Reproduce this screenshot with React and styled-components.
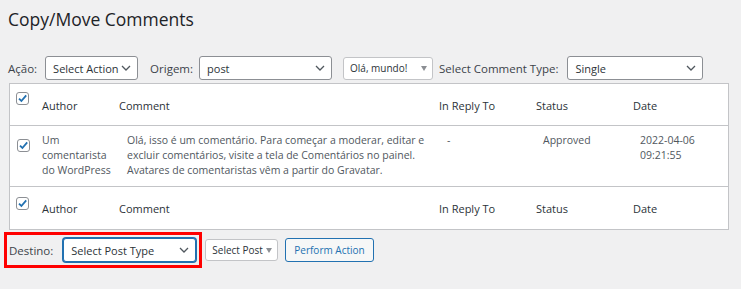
import React from 'react'
import styled, { createGlobalStyle } from 'styled-components'

const GlobalStyle = createGlobalStyle`
  html, body {
    margin: 0;
    background: #f0f0f1;
    font-family: 'Open Sans', 'Noto Sans', sans-serif;
    color: #3c434a;
  }
`

const Page = styled.div`
  padding: 6px 12px 0 8px;
  height: 289px;
  box-sizing: border-box;
`

const Title = styled.h1`
  margin: 0;
  font-size: 17.5px;
  font-weight: 400;
  line-height: 26px;
  color: #1d2327;
`

const Toolbar = styled.div`
  display: flex;
  align-items: center;
  margin-top: 24px;
  height: 24px;
`

const Label = styled.span`
  font-size: 11.5px;
  color: #3c434a;
  white-space: nowrap;
  margin-right: ${p => p.gap || 5}px;
`

const Select = styled.div`
  box-sizing: border-box;
  display: flex;
  align-items: center;
  justify-content: space-between;
  flex: none;
  width: ${p => p.w}px;
  height: 24px;
  padding: 0 6px 0 7px;
  background: #fff;
  border: 1px solid ${p => (p.focus ? '#2271b1' : '#8c8f94')};
  box-shadow: ${p => (p.focus ? '0 0 0 1px #2271b1' : 'none')};
  border-radius: 3px;
  font-size: 11px;
  white-space: nowrap;
  color: #2c3338;
  margin-right: ${p => p.gap || 0}px;
`

const MiniSelect = styled.div`
  box-sizing: border-box;
  display: flex;
  align-items: center;
  justify-content: space-between;
  flex: none;
  width: ${p => p.w}px;
  height: ${p => p.h || 23}px;
  padding: 0 5px 0 6px;
  background: #fff;
  border: 1px solid #c3c4c7;
  border-radius: 3px;
  font-size: 10px;
  white-space: nowrap;
  color: #2c3338;
  margin-right: ${p => p.gap || 0}px;
`

const Caret = styled.span`
  width: 0;
  height: 0;
  border-left: 3px solid transparent;
  border-right: 3px solid transparent;
  border-top: 5px solid #8c8f94;
`

const Chevron = () => (
  <svg width='10' height='6' viewBox='0 0 10 6'>
    <path d='M1 1 L5 5 L9 1' fill='none' stroke='#50575e' strokeWidth='1.3' />
  </svg>
)

const Table = styled.div`
  margin: 3px 0 0 1px;
  width: 720px;
  box-sizing: border-box;
  background: #fff;
  border: 1px solid #c3c4c7;
`

const Row = styled.div`
  display: grid;
  grid-template-columns: 32px 77px 320px 97px 97px 1fr;
  height: ${p => p.h}px;
  box-sizing: border-box;
  border-top: ${p => (p.first ? 'none' : '1px solid #c3c4c7')};
`

const BoxCell = styled.div`
  padding: ${p => p.top}px 0 0 ${p => p.left}px;
`

const HeadCell = styled.div`
  align-self: end;
  padding-bottom: ${p => p.bottom}px;
  font-size: 11px;
  line-height: 16px;
  color: #2c3338;
`

const Cell = styled.div`
  padding: 7px 0 0 ${p => p.indent || 0}px;
  font-size: 10.5px;
  line-height: 15px;
  color: #50575e;
`

const Check = () => (
  <svg width='13' height='13' viewBox='0 0 13 13'>
    <rect x='0.5' y='0.5' width='12' height='12' rx='2.5' fill='#fff' stroke='#8c8f94' />
    <path d='M3 6.6 L5.4 9 L10.2 3.4' fill='none' stroke='#2271b1' strokeWidth='1.8' />
  </svg>
)

const Bottom = styled.div`
  display: flex;
  align-items: center;
  margin-top: 2px;
`

const Highlight = styled.div`
  display: flex;
  align-items: center;
  margin-left: -4px;
  padding: 3px 3px 3px 2px;
  border: 3px solid #f00;
  margin-right: 3px;
`

const Button = styled.div`
  box-sizing: border-box;
  display: flex;
  align-items: center;
  height: 24px;
  padding: 0 8px;
  background: #f6f7f7;
  border: 1px solid #2271b1;
  border-radius: 3px;
  color: #2271b1;
  font-size: 10px;
  white-space: nowrap;
`

const columns = ['Author', 'Comment', 'In Reply To', 'Status', 'Date']

const HeadRow = ({ first, h, top, bottom }) => (
  <Row first={first} h={h}>
    <BoxCell top={top} left={6}><Check /></BoxCell>
    {columns.map(c => (
      <HeadCell key={c} bottom={bottom}>{c}</HeadCell>
    ))}
  </Row>
)

export default function App () {
  return (
    <Page>
      <GlobalStyle />
      <Title>Copy/Move Comments</Title>
      <Toolbar>
        <Label gap={8}>Ação:</Label>
        <Select w={93} gap={12}>Select Action <Chevron /></Select>
        <Label gap={6}>Origem:</Label>
        <Select w={133} gap={11}>post <Chevron /></Select>
        <MiniSelect w={90} gap={6}>Olá, mundo! <Caret /></MiniSelect>
        <Label gap={9}>Select Comment Type:</Label>
        <Select w={136}>Single <Chevron /></Select>
      </Toolbar>
      <Table>
        <HeadRow first h={41} top={4} bottom={11} />
        <Row h={61}>
          <BoxCell top={9} left={7}><Check /></BoxCell>
          <Cell>Um<br />comentarista<br />do WordPress</Cell>
          <Cell indent={8}>
            Olá, isso é um comentário. Para começar a moderar, editar e excluir comentários, visite a tela de Comentários no painel. Avatares de comentaristas vêm a partir do Gravatar.
          </Cell>
          <Cell indent={8}>-</Cell>
          <Cell indent={7}>Approved</Cell>
          <Cell indent={7}>2022-04-06<br />09:21:55</Cell>
        </Row>
        <HeadRow h={43} top={6} bottom={12} />
      </Table>
      <Bottom>
        <Highlight>
          <Label gap={10}>Destino:</Label>
          <Select w={133} focus>Select Post Type <Chevron /></Select>
        </Highlight>
        <MiniSelect w={73} h={22} gap={7}>Select Post <Caret /></MiniSelect>
        <Button>Perform Action</Button>
      </Bottom>
    </Page>
  )
}
